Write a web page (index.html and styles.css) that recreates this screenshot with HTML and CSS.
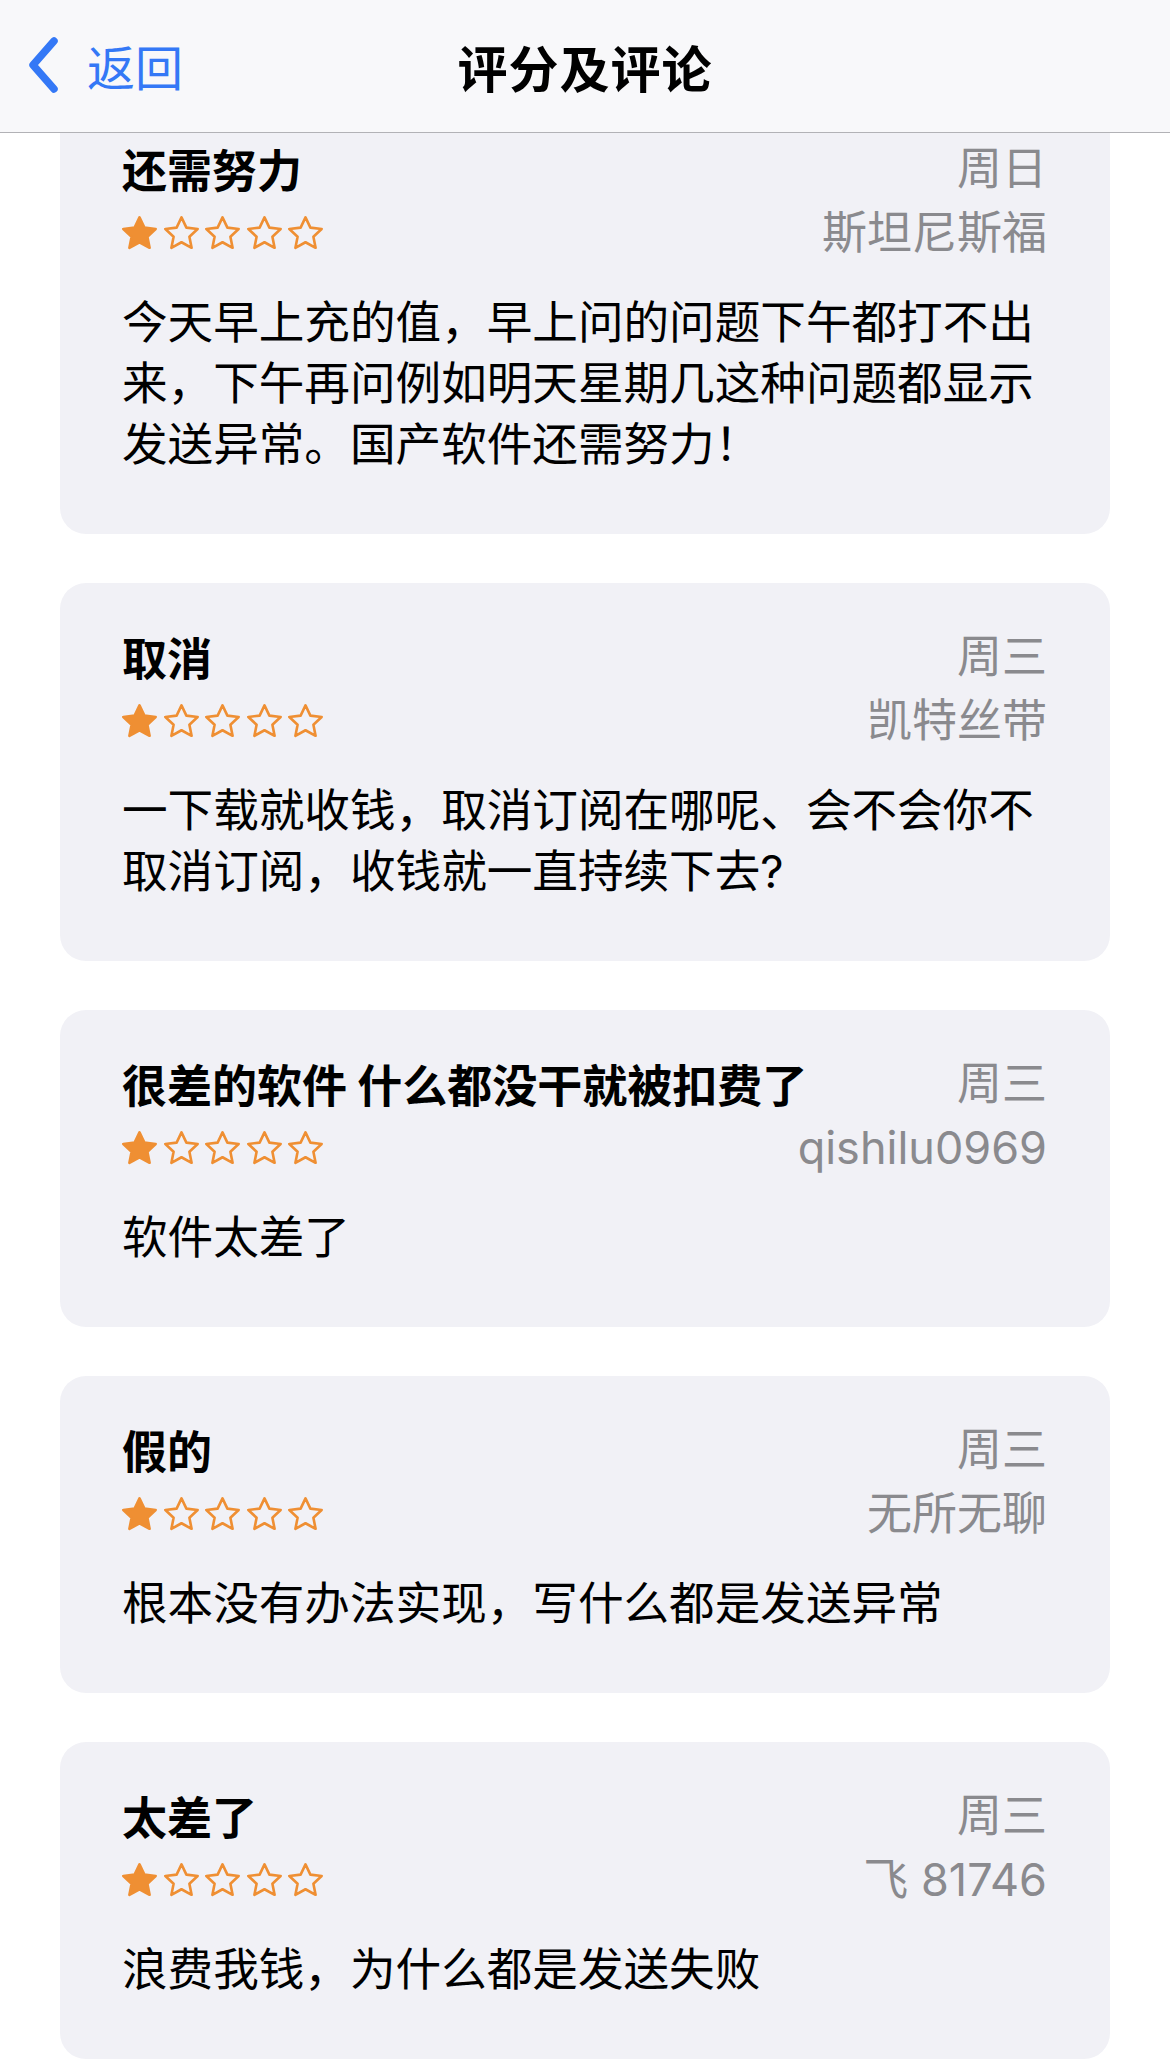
FILE: index.html
```html
<!DOCTYPE html>
<html lang="zh-CN">
<head>
<meta charset="utf-8">
<title>评分及评论</title>
<link rel="stylesheet" href="styles.css">
</head>
<body>
<header class="nav">
  <div class="back">
    <svg class="chev" width="36" height="58" viewBox="0 0 36 58"><path d="M29 5 L8 29 L29 53" fill="none" stroke="#3478f6" stroke-width="7.5" stroke-linecap="round" stroke-linejoin="round"/></svg>
    <span class="back-text">返回</span>
  </div>
  <h1 class="nav-title">评分及评论</h1>
</header>
<main class="list">
  <section class="card">
    <div class="row"><span class="title">还需努力</span><span class="meta">周日</span></div>
    <div class="row row2"><span class="stars"><svg class="star full" viewBox="1.6 1.8 20.8 19.8"><path d="M12 2.6l2.9 6.1 6.7.8-4.9 4.6 1.3 6.6L12 17.4l-6 3.3 1.3-6.6-4.9-4.6 6.7-.8z"/></svg><svg class="star" viewBox="1.6 1.8 20.8 19.8"><path d="M12 2.6l2.9 6.1 6.7.8-4.9 4.6 1.3 6.6L12 17.4l-6 3.3 1.3-6.6-4.9-4.6 6.7-.8z"/></svg><svg class="star" viewBox="1.6 1.8 20.8 19.8"><path d="M12 2.6l2.9 6.1 6.7.8-4.9 4.6 1.3 6.6L12 17.4l-6 3.3 1.3-6.6-4.9-4.6 6.7-.8z"/></svg><svg class="star" viewBox="1.6 1.8 20.8 19.8"><path d="M12 2.6l2.9 6.1 6.7.8-4.9 4.6 1.3 6.6L12 17.4l-6 3.3 1.3-6.6-4.9-4.6 6.7-.8z"/></svg><svg class="star" viewBox="1.6 1.8 20.8 19.8"><path d="M12 2.6l2.9 6.1 6.7.8-4.9 4.6 1.3 6.6L12 17.4l-6 3.3 1.3-6.6-4.9-4.6 6.7-.8z"/></svg></span><span class="meta">斯坦尼斯福</span></div>
    <p class="body">今天早上充的值，早上问的问题下午都打不出来，下午再问例如明天星期几这种问题都显示发送异常。国产软件还需努力！</p>
  </section>
  <section class="card">
    <div class="row"><span class="title">取消</span><span class="meta">周三</span></div>
    <div class="row row2"><span class="stars"><svg class="star full" viewBox="1.6 1.8 20.8 19.8"><path d="M12 2.6l2.9 6.1 6.7.8-4.9 4.6 1.3 6.6L12 17.4l-6 3.3 1.3-6.6-4.9-4.6 6.7-.8z"/></svg><svg class="star" viewBox="1.6 1.8 20.8 19.8"><path d="M12 2.6l2.9 6.1 6.7.8-4.9 4.6 1.3 6.6L12 17.4l-6 3.3 1.3-6.6-4.9-4.6 6.7-.8z"/></svg><svg class="star" viewBox="1.6 1.8 20.8 19.8"><path d="M12 2.6l2.9 6.1 6.7.8-4.9 4.6 1.3 6.6L12 17.4l-6 3.3 1.3-6.6-4.9-4.6 6.7-.8z"/></svg><svg class="star" viewBox="1.6 1.8 20.8 19.8"><path d="M12 2.6l2.9 6.1 6.7.8-4.9 4.6 1.3 6.6L12 17.4l-6 3.3 1.3-6.6-4.9-4.6 6.7-.8z"/></svg><svg class="star" viewBox="1.6 1.8 20.8 19.8"><path d="M12 2.6l2.9 6.1 6.7.8-4.9 4.6 1.3 6.6L12 17.4l-6 3.3 1.3-6.6-4.9-4.6 6.7-.8z"/></svg></span><span class="meta">凯特丝带</span></div>
    <p class="body">一下载就收钱，取消订阅在哪呢、会不会你不取消订阅，收钱就一直持续下去?</p>
  </section>
  <section class="card">
    <div class="row"><span class="title">很差的软件 什么都没干就被扣费了</span><span class="meta">周三</span></div>
    <div class="row row2"><span class="stars"><svg class="star full" viewBox="1.6 1.8 20.8 19.8"><path d="M12 2.6l2.9 6.1 6.7.8-4.9 4.6 1.3 6.6L12 17.4l-6 3.3 1.3-6.6-4.9-4.6 6.7-.8z"/></svg><svg class="star" viewBox="1.6 1.8 20.8 19.8"><path d="M12 2.6l2.9 6.1 6.7.8-4.9 4.6 1.3 6.6L12 17.4l-6 3.3 1.3-6.6-4.9-4.6 6.7-.8z"/></svg><svg class="star" viewBox="1.6 1.8 20.8 19.8"><path d="M12 2.6l2.9 6.1 6.7.8-4.9 4.6 1.3 6.6L12 17.4l-6 3.3 1.3-6.6-4.9-4.6 6.7-.8z"/></svg><svg class="star" viewBox="1.6 1.8 20.8 19.8"><path d="M12 2.6l2.9 6.1 6.7.8-4.9 4.6 1.3 6.6L12 17.4l-6 3.3 1.3-6.6-4.9-4.6 6.7-.8z"/></svg><svg class="star" viewBox="1.6 1.8 20.8 19.8"><path d="M12 2.6l2.9 6.1 6.7.8-4.9 4.6 1.3 6.6L12 17.4l-6 3.3 1.3-6.6-4.9-4.6 6.7-.8z"/></svg></span><span class="meta">qishilu0969</span></div>
    <p class="body">软件太差了</p>
  </section>
  <section class="card">
    <div class="row"><span class="title">假的</span><span class="meta">周三</span></div>
    <div class="row row2"><span class="stars"><svg class="star full" viewBox="1.6 1.8 20.8 19.8"><path d="M12 2.6l2.9 6.1 6.7.8-4.9 4.6 1.3 6.6L12 17.4l-6 3.3 1.3-6.6-4.9-4.6 6.7-.8z"/></svg><svg class="star" viewBox="1.6 1.8 20.8 19.8"><path d="M12 2.6l2.9 6.1 6.7.8-4.9 4.6 1.3 6.6L12 17.4l-6 3.3 1.3-6.6-4.9-4.6 6.7-.8z"/></svg><svg class="star" viewBox="1.6 1.8 20.8 19.8"><path d="M12 2.6l2.9 6.1 6.7.8-4.9 4.6 1.3 6.6L12 17.4l-6 3.3 1.3-6.6-4.9-4.6 6.7-.8z"/></svg><svg class="star" viewBox="1.6 1.8 20.8 19.8"><path d="M12 2.6l2.9 6.1 6.7.8-4.9 4.6 1.3 6.6L12 17.4l-6 3.3 1.3-6.6-4.9-4.6 6.7-.8z"/></svg><svg class="star" viewBox="1.6 1.8 20.8 19.8"><path d="M12 2.6l2.9 6.1 6.7.8-4.9 4.6 1.3 6.6L12 17.4l-6 3.3 1.3-6.6-4.9-4.6 6.7-.8z"/></svg></span><span class="meta">无所无聊</span></div>
    <p class="body">根本没有办法实现，写什么都是发送异常</p>
  </section>
  <section class="card">
    <div class="row"><span class="title">太差了</span><span class="meta">周三</span></div>
    <div class="row row2"><span class="stars"><svg class="star full" viewBox="1.6 1.8 20.8 19.8"><path d="M12 2.6l2.9 6.1 6.7.8-4.9 4.6 1.3 6.6L12 17.4l-6 3.3 1.3-6.6-4.9-4.6 6.7-.8z"/></svg><svg class="star" viewBox="1.6 1.8 20.8 19.8"><path d="M12 2.6l2.9 6.1 6.7.8-4.9 4.6 1.3 6.6L12 17.4l-6 3.3 1.3-6.6-4.9-4.6 6.7-.8z"/></svg><svg class="star" viewBox="1.6 1.8 20.8 19.8"><path d="M12 2.6l2.9 6.1 6.7.8-4.9 4.6 1.3 6.6L12 17.4l-6 3.3 1.3-6.6-4.9-4.6 6.7-.8z"/></svg><svg class="star" viewBox="1.6 1.8 20.8 19.8"><path d="M12 2.6l2.9 6.1 6.7.8-4.9 4.6 1.3 6.6L12 17.4l-6 3.3 1.3-6.6-4.9-4.6 6.7-.8z"/></svg><svg class="star" viewBox="1.6 1.8 20.8 19.8"><path d="M12 2.6l2.9 6.1 6.7.8-4.9 4.6 1.3 6.6L12 17.4l-6 3.3 1.3-6.6-4.9-4.6 6.7-.8z"/></svg></span><span class="meta">飞 81746</span></div>
    <p class="body">浪费我钱，为什么都是发送失败</p>
  </section>
</main>
</body>
</html>
```

FILE: styles.css
```css
* { box-sizing: border-box; }
html, body { margin: 0; padding: 0; background: #ffffff; }
body {
  width: 1170px;
  height: 2072px;
  overflow: hidden;
  font-family: "Inter", "Noto Sans CJK SC", sans-serif;
  color: #000;
}
.nav {
  position: relative;
  z-index: 2;
  height: 133px;
  background: #f8f8fa;
  border-bottom: 1px solid #b2b2b6;
  display: flex;
  align-items: center;
  justify-content: center;
}
.back {
  position: absolute;
  left: 25px;
  top: 36px;
  display: flex;
  align-items: center;
  gap: 26px;
  color: #3478f6;
}
.chev { display: block; }
.back-text {
  font-size: 48px;
  line-height: 58px;
  font-family: "Noto Sans CJK SC", sans-serif;
  font-weight: 400;
}
.nav-title {
  margin: 0;
  font-size: 50px;
  font-weight: 700;
  font-family: "Noto Sans CJK SC", sans-serif;
  line-height: 1;
  letter-spacing: 1px;
}
.list {
  overflow: hidden;
  height: 1939px;
  padding: 0 60px;
  display: flex;
  flex-direction: column;
  gap: 49px;
}
.card {
  flex: none;
  background: #f1f1f6;
  border-radius: 26px;
  padding: 47px 63px 59px 62px;
}
.card:first-child { margin-top: -38px; }
.row {
  display: flex;
  justify-content: space-between;
  align-items: center;
  height: 54px;
}
.row2 { margin-top: 10px; }
.title {
  font-size: 45px;
  font-weight: 700;
  line-height: 54px;
  font-family: "Noto Sans CJK SC", sans-serif;
}
.meta {
  font-size: 45px;
  line-height: 54px;
  color: #8a8a8e;
}
.stars { display: flex; gap: 6.5px; align-items: center; }
.star {
  width: 35px;
  height: 33.3px;
  display: block;
  fill: none;
  stroke: #ef8f33;
  stroke-width: 1.55;
  stroke-linejoin: round;
}
.star.full { fill: #ef8f33; }
.body {
  margin: 32px 0 0 0;
  font-size: 45.6px;
  line-height: 61px;
  font-weight: 400;
}
```
